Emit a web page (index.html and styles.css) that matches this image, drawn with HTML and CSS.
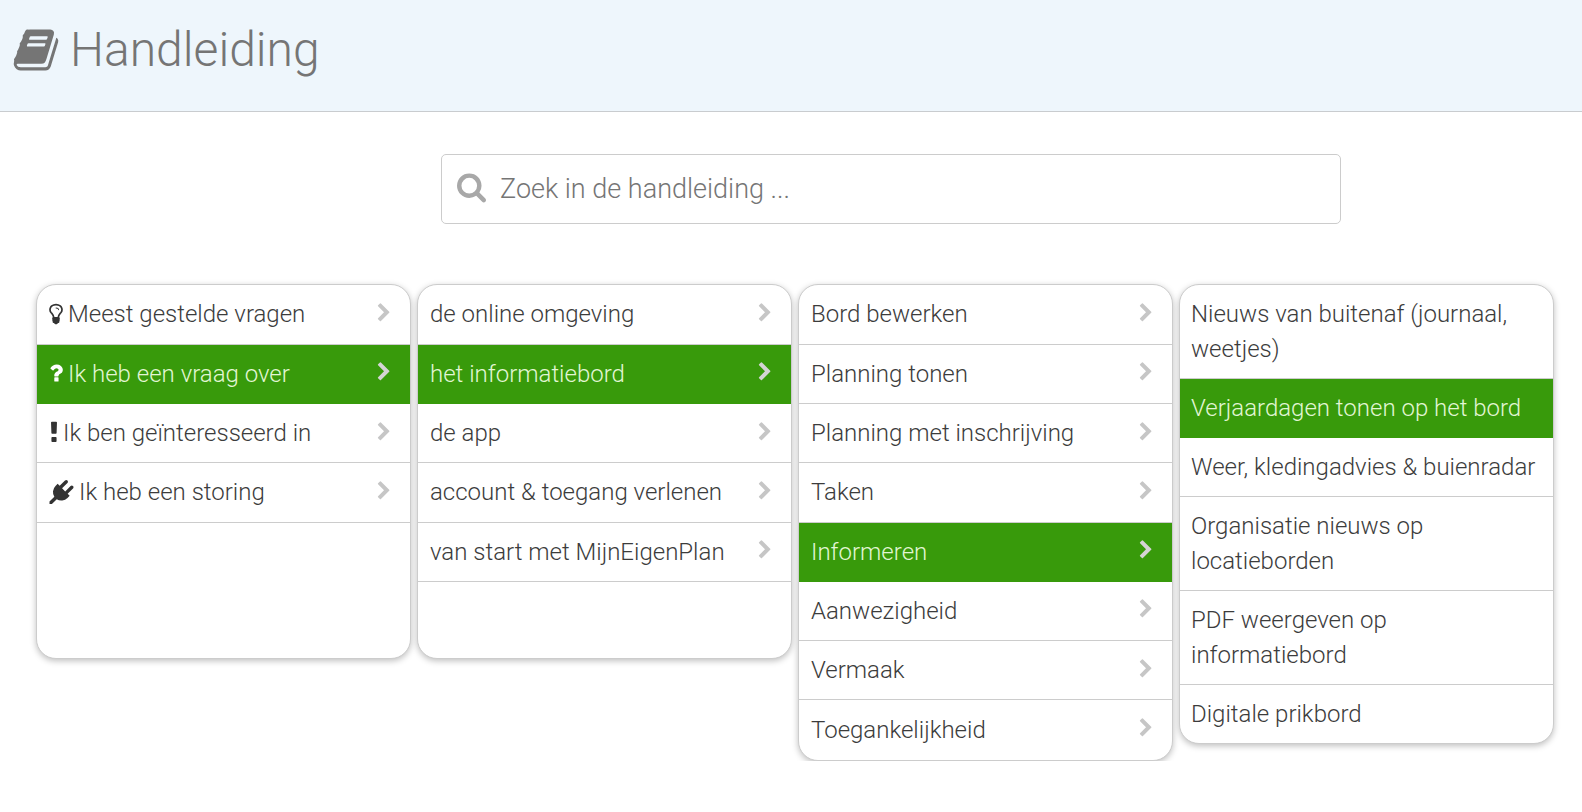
FILE: index.html
```html
<!DOCTYPE html>
<html lang="nl">
<head>
    <meta charset="UTF-8">
    <meta name="viewport" content="width=device-width, initial-scale=1.0">
    <title>Handleiding</title>
    <link rel="stylesheet" href="styles.css">
</head>
<body>
    <svg class="icon-defs" aria-hidden="true">
        <symbol id="i-book" viewBox="0 0 1792 1792"><path d="M1703 478q40 57 18 129l-275 906q-19 64-76.500 107.500t-122.500 43.500h-923q-77 0-148.500-53.500t-99.500-131.500q-24-67-2-127 0-4 3-27t4-37q1-8-3-21.500t-3-19.500q2-11 8-21t16.500-23.500 16.500-23.500q23-38 45-91.500t30-91.500q3-10 .5-30t-.5-28q3-11 17-28t17-23q21-36 42-92t25-90q1-9-2.500-32t.5-28q4-13 22-30.500t22-22.500q19-26 42.500-84.500t27.500-96.500q1-8-3-25.500t-2-26.500q2-8 9-18t18-23 17-21q8-12 16.500-30.500t15-35 16-36 19.500-32 26.500-23.500 36-11.500 47.500 5.500l-1 3q38-9 51-9h761q74 0 114 56t18 130l-274 906q-36 119-71.500 153.500t-128.500 34.500h-869q-27 0-38 15-11 16-1 43 24 70 144 70h923q29 0 56-15.500t35-41.500l300-987q7-22 5-57 38 15 59 43zm-1064 2q-4 13 2 22.500t20 9.500h608q13 0 25.500-9.500t16.500-22.500l21-64q4-13-2-22.500t-20-9.500h-608q-13 0-25.500 9.500t-16.500 22.500zm-83 256q-4 13 2 22.500t20 9.500h608q13 0 25.500-9.500t16.500-22.500l21-64q4-13-2-22.500t-20-9.500h-608q-13 0-25.500 9.500t-16.500 22.500z"/></symbol>
        <symbol id="i-search" viewBox="0 0 1664 1792"><path d="M1152 704q0-185-131.500-316.500t-316.500-131.500-316.500 131.500-131.500 316.500 131.500 316.500 316.500 131.500 316.500-131.500 131.500-316.500zm512 832q0 52-38 90t-90 38q-54 0-90-38l-343-342q-179 124-399 124-143 0-273.500-55.500t-225-150-150-225-55.500-273.500 55.500-273.500 150-225 225-150 273.500-55.500 273.500 55.500 225 150 150 225 55.500 273.500q0 220-124 399l343 343q37 37 37 90z"/></symbol>
        <symbol id="i-chevron" viewBox="0 0 1792 1792"><path d="M1363 877l-742 742q-19 19-45 19t-45-19l-166-166q-19-19-19-45t19-45l531-531-531-531q-19-19-19-45t19-45l166-166q19-19 45-19t45 19l742 742q19 19 19 45t-19 45z"/></symbol>
        <symbol id="i-bulb" viewBox="384 0 1024 1792"><path d="M1120 576q0 13-9.500 22.500t-22.500 9.500-22.500-9.500-9.500-22.500q0-46-54-71t-106-25q-13 0-22.500-9.500t-9.500-22.500 9.500-22.500 22.500-9.500q50 0 99.500 16t87 54 37.500 90zm160 0q0-72-34.500-134t-90-101.500-123-62-136.500-22.500-136.500 22.500-123 62-90 101.500-34.500 134q0 101 68 180 10 11 30.500 33t30.500 33q128 153 141 298h228q13-145 141-298 10-11 30.500-33t30.500-33q68-79 68-180zm128 0q0 155-103 268-45 49-74.500 87t-59.500 95.500-34 107.500q47 28 47 82 0 37-25 64 25 27 25 64 0 52-45 81 13 23 13 47 0 46-31.500 71t-77.500 25q-20 44-60 70t-87 26-87-26-60-70q-46 0-77.500-25t-31.500-71q0-24 13-47-45-29-45-81 0-37 25-64-25-27-25-64 0-54 47-82-4-50-34-107.500t-59.500-95.500-74.500-87q-103-113-103-268 0-99 44.500-184.500t117-142 164-89 186.500-32.500 186.500 32.500 164 89 117 142 44.500 184.500z"/></symbol>
        <symbol id="i-question" viewBox="0 0 1024 1792"><path d="M704 1256v240q0 16-12 28t-28 12h-240q-16 0-28-12t-12-28v-240q0-16 12-28t28-12h240q16 0 28 12t12 28zm316-600q0 54-15.500 101t-35 76.500-55 59.500-57.500 43.500-61 35.500q-41 23-68.500 65t-27.500 67q0 17-12 32.500t-28 15.500h-240q-15 0-25.500-18.500t-10.500-37.500v-45q0-83 65-156.500t143-108.500q59-27 84-56t25-76q0-42-46.500-74t-107.500-32q-65 0-108 29-35 25-107 115-13 16-31 16-12 0-25-8l-164-125q-13-10-15.500-25t5.500-28q160-266 464-266 80 0 161 31t146 83 106 127.500 41 158.500z"/></symbol>
        <symbol id="i-exclamation" viewBox="640 0 512 1792"><path d="M1088 1256v240q0 26-19 45t-45 19h-256q-26 0-45-19t-19-45v-240q0-26 19-45t45-19h256q26 0 45 19t19 45zm30-1128l-28 768q-1 26-20.500 45t-45.500 19h-256q-26 0-45.500-19t-20.500-45l-28-768q-1-26 17.500-45t44.500-19h320q26 0 44.500 19t17.500 45z"/></symbol>
        <symbol id="i-plug" viewBox="0 0 1792 1792"><path d="M1755 453q37 38 37 90.500t-37 90.500l-401 400 150 150-160 160q-163 163-389.500 186.500t-411.500-100.500l-362 362h-181v-181l362-362q-124-185-100.500-411.500t186.500-389.500l160-160 150 150 400-401q38-37 91-37t90 37 37 90.500-37 90.500l-400 401 234 234 401-400q38-37 91-37t90 37z"/></symbol>
    </svg>

    <header class="page-header">
        <svg class="header-icon"><use href="#i-book"></use></svg>
        <h1>Handleiding</h1>
    </header>

    <div class="search-box">
        <svg class="search-icon"><use href="#i-search"></use></svg>
        <input type="text" placeholder="Zoek in de handleiding ..." autocomplete="off">
    </div>

    <div class="columns">
        <ul class="tile-list nav tall">
            <li><svg class="lead-icon bulb"><use href="#i-bulb"></use></svg><span>Meest gestelde vragen</span><svg class="chevron"><use href="#i-chevron"></use></svg></li>
            <li class="active"><svg class="lead-icon question"><use href="#i-question"></use></svg><span>Ik heb een vraag over</span><svg class="chevron"><use href="#i-chevron"></use></svg></li>
            <li><svg class="lead-icon exclamation"><use href="#i-exclamation"></use></svg><span>Ik ben geïnteresseerd in</span><svg class="chevron"><use href="#i-chevron"></use></svg></li>
            <li><svg class="lead-icon plug"><use href="#i-plug"></use></svg><span>Ik heb een storing</span><svg class="chevron"><use href="#i-chevron"></use></svg></li>
        </ul>
        <ul class="tile-list nav tall">
            <li><span>de online omgeving</span><svg class="chevron"><use href="#i-chevron"></use></svg></li>
            <li class="active"><span>het informatiebord</span><svg class="chevron"><use href="#i-chevron"></use></svg></li>
            <li><span>de app</span><svg class="chevron"><use href="#i-chevron"></use></svg></li>
            <li><span>account &amp; toegang verlenen</span><svg class="chevron"><use href="#i-chevron"></use></svg></li>
            <li><span>van start met MijnEigenPlan</span><svg class="chevron"><use href="#i-chevron"></use></svg></li>
        </ul>
        <ul class="tile-list nav">
            <li><span>Bord bewerken</span><svg class="chevron"><use href="#i-chevron"></use></svg></li>
            <li><span>Planning tonen</span><svg class="chevron"><use href="#i-chevron"></use></svg></li>
            <li><span>Planning met inschrijving</span><svg class="chevron"><use href="#i-chevron"></use></svg></li>
            <li><span>Taken</span><svg class="chevron"><use href="#i-chevron"></use></svg></li>
            <li class="active"><span>Informeren</span><svg class="chevron"><use href="#i-chevron"></use></svg></li>
            <li><span>Aanwezigheid</span><svg class="chevron"><use href="#i-chevron"></use></svg></li>
            <li><span>Vermaak</span><svg class="chevron"><use href="#i-chevron"></use></svg></li>
            <li><span>Toegankelijkheid</span><svg class="chevron"><use href="#i-chevron"></use></svg></li>
        </ul>
        <ul class="tile-list articles">
            <li><span>Nieuws van buitenaf (journaal, weetjes)</span></li>
            <li class="active"><span>Verjaardagen tonen op het bord</span></li>
            <li><span>Weer, kledingadvies &amp; buienradar</span></li>
            <li><span>Organisatie nieuws op locatieborden</span></li>
            <li><span>PDF weergeven op informatiebord</span></li>
            <li><span>Digitale prikbord</span></li>
        </ul>
    </div>
</body>
</html>
```

FILE: styles.css
```css
* {
    box-sizing: border-box;
}
body {
    margin: 0;
    font-family: Roboto, "Liberation Sans", sans-serif;
    font-weight: 300;
    background-color: #fff;
    color: #3c3c3c;
}
.icon-defs {
    display: none;
}
.page-header {
    display: flex;
    align-items: center;
    height: 112px;
    padding-left: 12px;
    padding-bottom: 12px;
    background-color: #eef6fc;
    border-bottom: 1px solid #c9cccf;
    color: #757575;
}
.page-header h1 {
    margin: 0 0 0 10px;
    font-size: 48px;
    font-weight: 300;
}
.header-icon {
    width: 48px;
    height: 48px;
    fill: #757575;
}
.search-box {
    display: flex;
    align-items: center;
    width: 900px;
    height: 70px;
    margin: 42px 0 0 441px;
    padding-left: 15px;
    border: 1px solid #ccc;
    border-radius: 5px;
}
.search-icon {
    flex: none;
    width: 29px;
    height: 32px;
    fill: #a8a8a8;
}
.search-box input {
    flex: 1;
    margin-left: 12px;
    border: 0;
    outline: 0;
    font-family: inherit;
    font-size: 27px;
    font-weight: 300;
    color: #3c3c3c;
}
.search-box input::placeholder {
    color: #757575;
    opacity: 1;
}
.columns {
    display: flex;
    align-items: flex-start;
    gap: 6px;
    margin: 60px 0 0 36px;
}
.tile-list {
    width: 375px;
    margin: 0;
    padding: 0;
    list-style: none;
    border: 1px solid #ccc;
    border-radius: 20px;
    background: #fff;
    box-shadow: 0 2px 6px rgba(0, 0, 0, 0.25);
    overflow: hidden;
}
.tile-list.tall {
    height: 375px;
}
.tile-list li {
    display: flex;
    align-items: center;
    padding: 12px 12px 11px;
    border-bottom: 1px solid #ccc;
    font-size: 24px;
    line-height: 35px;
}
.tile-list.nav li {
    min-height: 59.25px;
}
.tile-list.nav li:first-child {
    min-height: 59.8px;
}
.tile-list.articles li {
    padding-left: 11px;
}
.tile-list li:last-child {
    border-bottom: 0;
}
.tile-list.tall li:last-child {
    border-bottom: 1px solid #ccc;
}
.tile-list li.active {
    background-color: #389a0b;
    border-bottom-color: #389a0b;
    color: #e2f6d4;
}
.tile-list li span {
    flex: 1;
}
.lead-icon {
    flex: none;
    height: 24px;
    margin-top: -2px;
    margin-right: 5px;
    fill: #333;
}
.lead-icon.bulb {
    width: 14px;
}
.lead-icon.question {
    width: 14px;
    fill: #fff;
}
.lead-icon.exclamation {
    width: 8px;
    margin-left: 1px;
    margin-right: 5px;
}
.lead-icon.plug {
    width: 25px;
    margin-right: 5px;
}
.chevron {
    flex: none;
    width: 20px;
    height: 20px;
    margin: -4px 4px 0 0;
    fill: #c6c6c6;
}
.active .chevron {
    fill: #d4d4d4;
}
```
